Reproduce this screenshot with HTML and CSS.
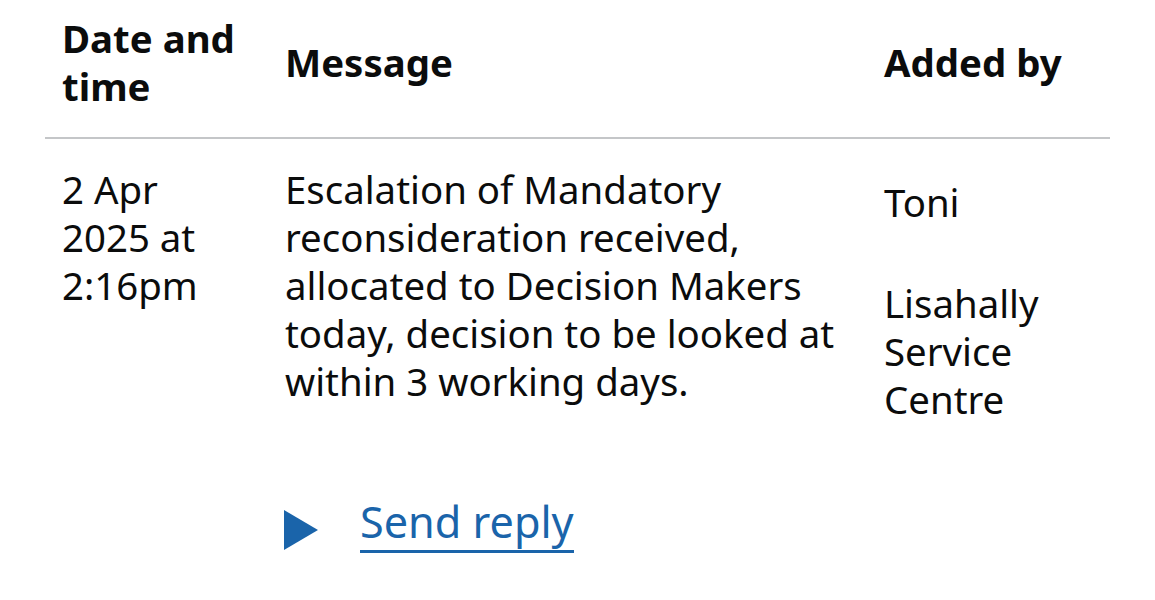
FILE: index.html
```html
<!DOCTYPE html>
<html lang="en">
<head>
<meta charset="utf-8">
<title>Messages</title>
<link rel="stylesheet" href="styles.css">
</head>
<body>
<main class="page">
  <table class="table">
    <colgroup>
      <col class="col-date">
      <col class="col-message">
      <col class="col-added">
    </colgroup>
    <thead>
      <tr>
        <th class="th th-date">Date and time</th>
        <th class="th th-message">Message</th>
        <th class="th th-added">Added by</th>
      </tr>
    </thead>
    <tbody>
      <tr>
        <td class="td td-date">2 Apr 2025 at 2:16pm</td>
        <td class="td td-message">Escalation of Mandatory reconsideration received, allocated to Decision Makers today, decision to be looked at within 3 working days.</td>
        <td class="td td-added">
          <div class="added-name">Toni</div>
          <div class="added-office">Lisahally Service Centre</div>
        </td>
      </tr>
    </tbody>
  </table>
  <div class="reply">
    <span class="reply-arrow" aria-hidden="true"></span>
    <a class="reply-link" href="#">Send reply</a>
  </div>
</main>
</body>
</html>
```

FILE: styles.css
```css
html, body {
  margin: 0;
  padding: 0;
  background: #ffffff;
}

body {
  font-family: "Noto Sans", "Liberation Sans", Arial, sans-serif;
  color: #0b0c0c;
  font-size: 38.4px;
  line-height: 48px;
}

.page {
  padding-left: 45px;
  width: 1065px;
}

.table {
  width: 1065px;
  border-collapse: collapse;
  table-layout: fixed;
}

.col-date { width: 240px; }
.col-message { width: 599px; }
.col-added { width: 226px; }

.th {
  font-weight: 700;
  text-align: left;
  vertical-align: middle;
  padding: 14px 38px 27px 0;
  border-bottom: 2px solid #c4c6c8;
}

.th-date { padding-left: 17px; }
.th-message { padding-right: 20px; }
.th-added { padding-right: 0; }

.td {
  vertical-align: top;
  padding: 26px 38px 24px 0;
  text-align: left;
}

.td-date { padding-left: 17px; }
.td-message { padding-right: 20px; }
.td-added { padding-right: 0; }

.added-name {
  padding-top: 13px;
}

.added-office {
  margin-top: 53px;
}

.reply {
  display: flex;
  align-items: flex-start;
  margin-top: 51px;
  margin-left: 239px;
  font-size: 43.2px;
  line-height: 48px;
}

.reply-arrow {
  width: 0;
  height: 0;
  margin-top: 12px;
  margin-right: 42px;
  border-style: solid;
  border-width: 20px 0 20px 34px;
  border-color: transparent transparent transparent #1a64aa;
}

.reply-link {
  display: inline-block;
  color: #1a64aa;
  text-decoration: none;
  padding-bottom: 4px;
  border-bottom: 3px solid #1a64aa;
}
```
